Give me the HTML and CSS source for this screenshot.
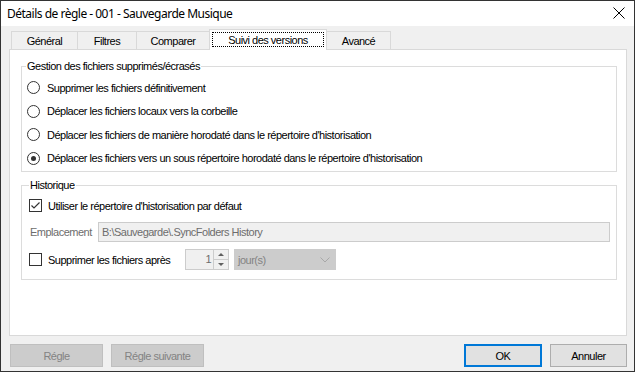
FILE: index.html
```html
<!DOCTYPE html>
<html lang="fr">
<head>
    <meta charset="UTF-8">
    <title>Détails de règle - 001 - Sauvegarde Musique</title>
    <link rel="stylesheet" href="styles.css">
</head>
<body>
    <div class="window">
        <div class="titlebar">
            <span class="title">Détails de règle - 001 - Sauvegarde Musique</span>
            <svg class="close" width="12" height="12" viewBox="0 0 12 12">
                <path d="M0.5 0.5 L11.5 11.5 M11.5 0.5 L0.5 11.5" stroke="#000" stroke-width="1" fill="none"/>
            </svg>
        </div>

        <div class="dialog">
            <div class="tabs">
                <div class="tab tab-general">Général</div>
                <div class="tab tab-filters">Filtres</div>
                <div class="tab tab-compare">Comparer</div>
                <div class="tab tab-active"><span class="focus">Suivi des versions</span></div>
                <div class="tab tab-advanced">Avancé</div>
            </div>

            <div class="panel">
                <div class="group group-delete">
                    <span class="group-title">Gestion des fichiers supprimés/écrasés</span>
                    <label class="option"><span class="radio"></span>Supprimer les fichiers définitivement</label>
                    <label class="option"><span class="radio"></span>Déplacer les fichiers locaux vers la corbeille</label>
                    <label class="option"><span class="radio"></span>Déplacer les fichiers de manière horodaté dans le répertoire d'historisation</label>
                    <label class="option"><span class="radio checked"></span>Déplacer les fichiers vers un sous répertoire horodaté dans le répertoire d'historisation</label>
                </div>

                <div class="group group-history">
                    <span class="group-title">Historique</span>
                    <label class="check-row">
                        <span class="checkbox">
                            <svg width="11" height="11" viewBox="0 0 11 11">
                                <path d="M1.5 5.5 L4 8 L9.5 2.5" stroke="#333" stroke-width="1.2" fill="none"/>
                            </svg>
                        </span>
                        Utiliser le répertoire d'historisation par défaut
                    </label>
                    <div class="path-row">
                        <span class="path-label">Emplacement</span>
                        <div class="path-input">B:\Sauvegarde\.SyncFolders History</div>
                    </div>
                    <div class="purge-row">
                        <span class="checkbox"></span>
                        <span class="purge-label">Supprimer les fichiers après</span>
                        <div class="spinner">
                            <span class="spinner-value">1</span>
                            <div class="spinner-buttons">
                                <span class="spin-up"></span>
                                <span class="spin-down"></span>
                            </div>
                        </div>
                        <div class="combo">
                            <span>jour(s)</span>
                            <svg width="10" height="6" viewBox="0 0 10 6">
                                <path d="M0.5 0.5 L5 5 L9.5 0.5" stroke="#a8a8a8" stroke-width="1" fill="none"/>
                            </svg>
                        </div>
                    </div>
                </div>
            </div>

            <div class="footer">
                <div class="footer-left">
                    <button class="btn btn-disabled btn-wide">Régle</button>
                    <button class="btn btn-disabled btn-wide">Régle suivante</button>
                </div>
                <div class="footer-right">
                    <button class="btn btn-default">OK</button>
                    <button class="btn btn-cancel">Annuler</button>
                </div>
            </div>
        </div>
    </div>
</body>
</html>
```

FILE: styles.css
```css
* {
    margin: 0;
    padding: 0;
    box-sizing: border-box;
}

body {
    width: 635px;
    height: 372px;
    overflow: hidden;
    font-family: "Liberation Sans", Arial, sans-serif;
    font-size: 11px;
    letter-spacing: -0.5px;
    color: #000;
    background: #f0f0f0;
}

.window {
    width: 635px;
    height: 372px;
    border: 1px solid #333;
    display: flex;
    flex-direction: column;
    background: #f0f0f0;
}

/* title bar */
.titlebar {
    height: 25px;
    background: #fff;
    display: flex;
    align-items: center;
    justify-content: space-between;
    padding: 0 9px 0 6px;
}

.title {
    font-family: "Noto Sans", "Open Sans", sans-serif;
    font-size: 12px;
    letter-spacing: -0.5px;
}

.close {
    display: block;
    margin-top: -1px;
}

.dialog {
    flex: 1;
    display: flex;
    flex-direction: column;
    padding: 3px 7px 0 8px;
}

/* tabs */
.tabs {
    display: flex;
    align-items: flex-end;
    height: 20px;
    padding-left: 2px;
}

.tab {
    height: 18px;
    border: 1px solid #d9d9d9;
    border-bottom: none;
    margin-right: -1px;
    background: #f0f0f0;
    display: flex;
    align-items: center;
    justify-content: center;
    padding-top: 1px;
}

.tab-general { width: 67px; }
.tab-filters { width: 60px; }
.tab-compare { width: 74px; }
.tab-advanced { width: 65px; }

.tab-active {
    position: relative;
    z-index: 1;
    width: 118px;
    height: 21px;
    margin-bottom: -1px;
    background: #fff;
    padding: 2px 2px 3px;
}

.focus {
    display: flex;
    align-items: center;
    justify-content: center;
    width: 100%;
    height: 100%;
    border: 1px dotted #000;
}

.panel {
    height: 287px;
    background: #fff;
    border: 1px solid #d9d9d9;
    padding: 16px 9px 0 11px;
}

/* group boxes */
.group {
    position: relative;
    border: 1px solid #dcdcdc;
}

.group-title {
    position: absolute;
    top: -7px;
    left: 4px;
    line-height: 13px;
    padding: 0 1px;
    background: #fff;
}

.group-delete {
    height: 106px;
    padding: 9px 0 1px 5px;
}

.group-history {
    margin-top: 13px;
    height: 95px;
    padding: 10px 6px 9px 7px;
}

.group-history .group-title {
    left: 7px;
}

.option {
    display: flex;
    align-items: center;
    height: 23.5px;
}

.radio {
    width: 13px;
    height: 13px;
    border: 1px solid #333;
    border-radius: 50%;
    margin-right: 7px;
    display: flex;
    align-items: center;
    justify-content: center;
    background: #fff;
}

.radio.checked::after {
    content: "";
    width: 5px;
    height: 5px;
    border-radius: 50%;
    background: #333;
}

.checkbox {
    width: 13px;
    height: 13px;
    border: 1px solid #333;
    background: #fff;
    margin-right: 6px;
    display: flex;
    align-items: center;
    justify-content: center;
    flex-shrink: 0;
}

.checkbox svg {
    display: block;
}

.check-row {
    display: flex;
    align-items: center;
    height: 19px;
}

.path-row {
    display: flex;
    align-items: center;
    margin-top: 7px;
    height: 20px;
}

.path-label {
    width: 69px;
    padding-left: 1px;
    color: #6d6d6d;
}

.path-input {
    flex: 1;
    height: 20px;
    border: 1px solid #ccc;
    background: #f0f0f0;
    color: #6d6d6d;
    padding-left: 3px;
    line-height: 18px;
}

.purge-row {
    display: flex;
    align-items: center;
    margin-top: 7px;
    height: 21px;
}

.purge-label {
    width: 137px;
}

.spinner {
    width: 44px;
    height: 21px;
    border: 1px solid #ccc;
    background: #f0f0f0;
    display: flex;
    margin-right: 5px;
}

.spinner-value {
    flex: 1;
    text-align: right;
    padding-right: 2px;
    line-height: 19px;
    color: #6d6d6d;
}

.spinner-buttons {
    width: 15px;
    display: flex;
    flex-direction: column;
    border-left: 1px solid #ccc;
}

.spin-up,
.spin-down {
    flex: 1;
    display: flex;
    align-items: center;
    justify-content: center;
}

.spin-up {
    border-bottom: 1px solid #ccc;
}

.spin-up::after {
    content: "";
    border-left: 3px solid transparent;
    border-right: 3px solid transparent;
    border-bottom: 3px solid #606060;
}

.spin-down::after {
    content: "";
    border-left: 3px solid transparent;
    border-right: 3px solid transparent;
    border-top: 3px solid #606060;
}

.combo {
    width: 102px;
    height: 21px;
    background: #ccc;
    border: 1px solid #ccc;
    color: #838383;
    display: flex;
    align-items: center;
    justify-content: space-between;
    padding: 0 5px 0 3px;
}

/* footer buttons */
.footer {
    display: flex;
    justify-content: space-between;
    margin-top: 8px;
    padding-left: 1px;
}

.footer-left,
.footer-right {
    display: flex;
    gap: 8px;
}

.btn {
    height: 23px;
    width: 78px;
    font-family: "Liberation Sans", Arial, sans-serif;
    font-size: 11px;
    letter-spacing: -0.5px;
    background: #e1e1e1;
    border: 1px solid #adadad;
    color: #000;
}

.btn-wide {
    width: 93px;
}

.btn-disabled {
    background: #ccc;
    border-color: #bfbfbf;
    color: #838383;
}

.btn-default {
    border: 2px solid #0078d7;
}

.btn-cancel {
    width: 77px;
}
```
